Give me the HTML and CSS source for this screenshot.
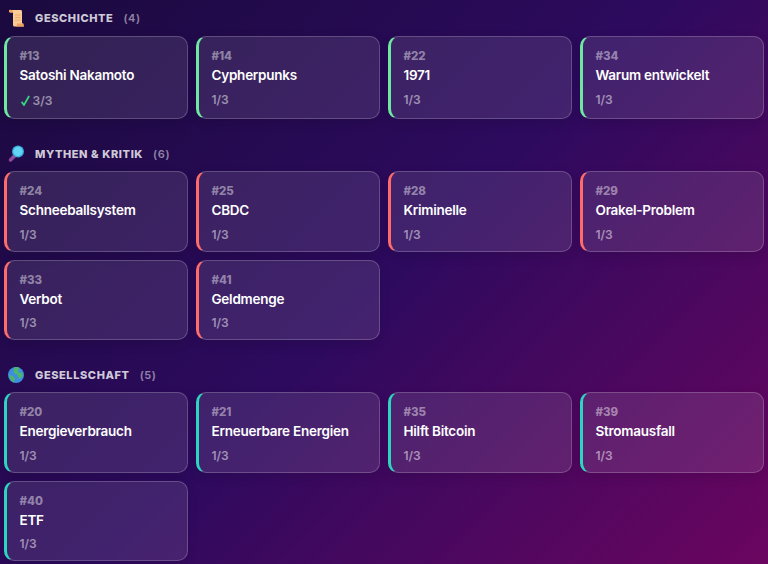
FILE: index.html
```html
<!DOCTYPE html>
<html lang="de">
  <head>
    <meta charset="UTF-8" />
    <title>Themen</title>
    <link rel="stylesheet" href="styles.css">
  </head>
  <body>
    <div id="container">
      <section class="group group-history">
        <h2 class="group-title">
          <svg class="group-icon" viewBox="0 0 16 18">
            <path d="M1.500 1h11c1 0 1.500 .6 1.500 1.500V14.500h1.200l.6 3H6.500c-1 0-1.500-.6-1.500-1.500V3.500H2C.8 3 .6 1.500 1.500 1z" fill="#f8cb94"/>
            <path d="M1.500 1c1.800-.5 3.500 .5 3.500 2v.5H2C.8 3 .6 1.500 1.500 1zM14 14.500h1.200l.6 3H7.500c1.500-.4 1.800-2 1.500-3z" fill="#ee9f60"/>
            <path d="M7 6h5.500M7 8.500h5.500M7 11h5.500" stroke="#f0a868" stroke-width="1"/>
          </svg>
          <span class="group-name">Geschichte</span>
          <span class="group-count">(4)</span>
        </h2>
        <div class="cards">
          <div class="card">
            <div class="card-num">#13</div>
            <div class="card-title">Satoshi Nakamoto</div>
            <div class="card-progress">
              <svg class="check" viewBox="0 0 10 12"><path d="M.8 7.500l2.500 3.500L9 1" fill="none" stroke="#34d17f" stroke-width="2"/></svg>3/3
            </div>
          </div>
          <div class="card">
            <div class="card-num">#14</div>
            <div class="card-title">Cypherpunks</div>
            <div class="card-progress">1/3</div>
          </div>
          <div class="card">
            <div class="card-num">#22</div>
            <div class="card-title">1971</div>
            <div class="card-progress">1/3</div>
          </div>
          <div class="card">
            <div class="card-num">#34</div>
            <div class="card-title">Warum entwickelt</div>
            <div class="card-progress">1/3</div>
          </div>
        </div>
      </section>

      <section class="group group-myths">
        <h2 class="group-title">
          <svg class="group-icon" viewBox="0 0 16 18">
            <path d="M6.500 11L2.500 15" stroke="#8e4a9e" stroke-width="3.500" stroke-linecap="round"/>
            <circle cx="10" cy="6.500" r="6" fill="#3aa7d8"/>
            <circle cx="10" cy="6.500" r="4.700" fill="#62d3f2"/>
          </svg>
          <span class="group-name">Mythen &amp; Kritik</span>
          <span class="group-count">(6)</span>
        </h2>
        <div class="cards">
          <div class="card">
            <div class="card-num">#24</div>
            <div class="card-title">Schneeballsystem</div>
            <div class="card-progress">1/3</div>
          </div>
          <div class="card">
            <div class="card-num">#25</div>
            <div class="card-title">CBDC</div>
            <div class="card-progress">1/3</div>
          </div>
          <div class="card">
            <div class="card-num">#28</div>
            <div class="card-title">Kriminelle</div>
            <div class="card-progress">1/3</div>
          </div>
          <div class="card">
            <div class="card-num">#29</div>
            <div class="card-title">Orakel-Problem</div>
            <div class="card-progress">1/3</div>
          </div>
          <div class="card">
            <div class="card-num">#33</div>
            <div class="card-title">Verbot</div>
            <div class="card-progress">1/3</div>
          </div>
          <div class="card">
            <div class="card-num">#41</div>
            <div class="card-title">Geldmenge</div>
            <div class="card-progress">1/3</div>
          </div>
        </div>
      </section>

      <section class="group group-society">
        <h2 class="group-title">
          <svg class="group-icon" viewBox="0 0 16 18">
            <circle cx="8" cy="9" r="8" fill="#3d8ee0"/>
            <path d="M6 1.500c2-.8 4-.6 5.500 .5L10 5 11 7 14 6.500 15 10 11.500 13 10 11 9.500 8.500 7 8 5.500 6zM1 9l4 1 2 2.500-1 4C3.500 15.500 1.500 12 1 9z" fill="#4fb56a"/>
          </svg>
          <span class="group-name">Gesellschaft</span>
          <span class="group-count">(5)</span>
        </h2>
        <div class="cards">
          <div class="card">
            <div class="card-num">#20</div>
            <div class="card-title">Energieverbrauch</div>
            <div class="card-progress">1/3</div>
          </div>
          <div class="card">
            <div class="card-num">#21</div>
            <div class="card-title">Erneuerbare Energien</div>
            <div class="card-progress">1/3</div>
          </div>
          <div class="card">
            <div class="card-num">#35</div>
            <div class="card-title">Hilft Bitcoin</div>
            <div class="card-progress">1/3</div>
          </div>
          <div class="card">
            <div class="card-num">#39</div>
            <div class="card-title">Stromausfall</div>
            <div class="card-progress">1/3</div>
          </div>
          <div class="card">
            <div class="card-num">#40</div>
            <div class="card-title">ETF</div>
            <div class="card-progress">1/3</div>
          </div>
        </div>
      </section>
    </div>
  </body>
</html>
```
FILE: styles.css
```css
html {
  height: 100%;
}
body {
  height: 564px;
  margin: 0;
  overflow: hidden;
  background: linear-gradient(135deg, #1a0a3e 0%, #2d0a5e 50%, #6b0560 100%);
  font-family: "Inter", "Noto Sans", sans-serif;
}
#container {
  display: flex;
  flex-direction: column;
  gap: 24px;
  padding: 8px 4px 0;
}

.group-title {
  display: flex;
  align-items: center;
  box-sizing: border-box;
  height: 20px;
  margin: 0 0 8px;
  padding: 1px 0 0 4px;
  font-size: 11px;
  font-weight: 800;
  letter-spacing: 0.6px;
  text-transform: uppercase;
  color: rgba(255, 255, 255, 0.8);
}
.group-history .group-title {
  padding-top: 0;
}
.group-icon {
  width: 16px;
  height: 18px;
  margin-right: 11px;
}
.group-count {
  margin-left: 10px;
  font-weight: 600;
  text-transform: none;
  color: rgba(255, 255, 255, 0.5);
}

.cards {
  display: grid;
  grid-template-columns: repeat(4, 184px);
  gap: 8px;
}

.card {
  box-sizing: border-box;
  height: 80.5px;
  padding: 13px 12px 0 12.5px;
  background: rgba(255, 255, 255, 0.1);
  border: 1px solid rgba(255, 255, 255, 0.2);
  border-left: 3px solid #6ee7a0;
  border-radius: 10px;
  box-shadow: 0 4px 12px rgba(0, 0, 0, 0.1);
  color: #fff;
}
.group-history .card {
  height: 83px;
}
.group-myths .card {
  border-left-color: #ff6b6b;
}
.group-society .card {
  border-left-color: #2dd4bf;
}

.card-num {
  font-size: 11.5px;
  font-weight: 800;
  line-height: 13px;
  color: rgba(255, 255, 255, 0.45);
}
.card-title {
  margin-top: 3px;
  font-size: 13.5px;
  font-weight: 600;
  letter-spacing: -0.25px;
  line-height: 18px;
}
.card-progress {
  display: flex;
  align-items: center;
  margin-top: 7.5px;
  font-size: 12px;
  font-weight: 600;
  line-height: 16px;
  color: rgba(255, 255, 255, 0.5);
}
.group-history .card:first-child .card-progress {
  margin-top: 9px;
}
.check {
  width: 9px;
  height: 11px;
  margin: 0 3px 1px 1px;
}
```
